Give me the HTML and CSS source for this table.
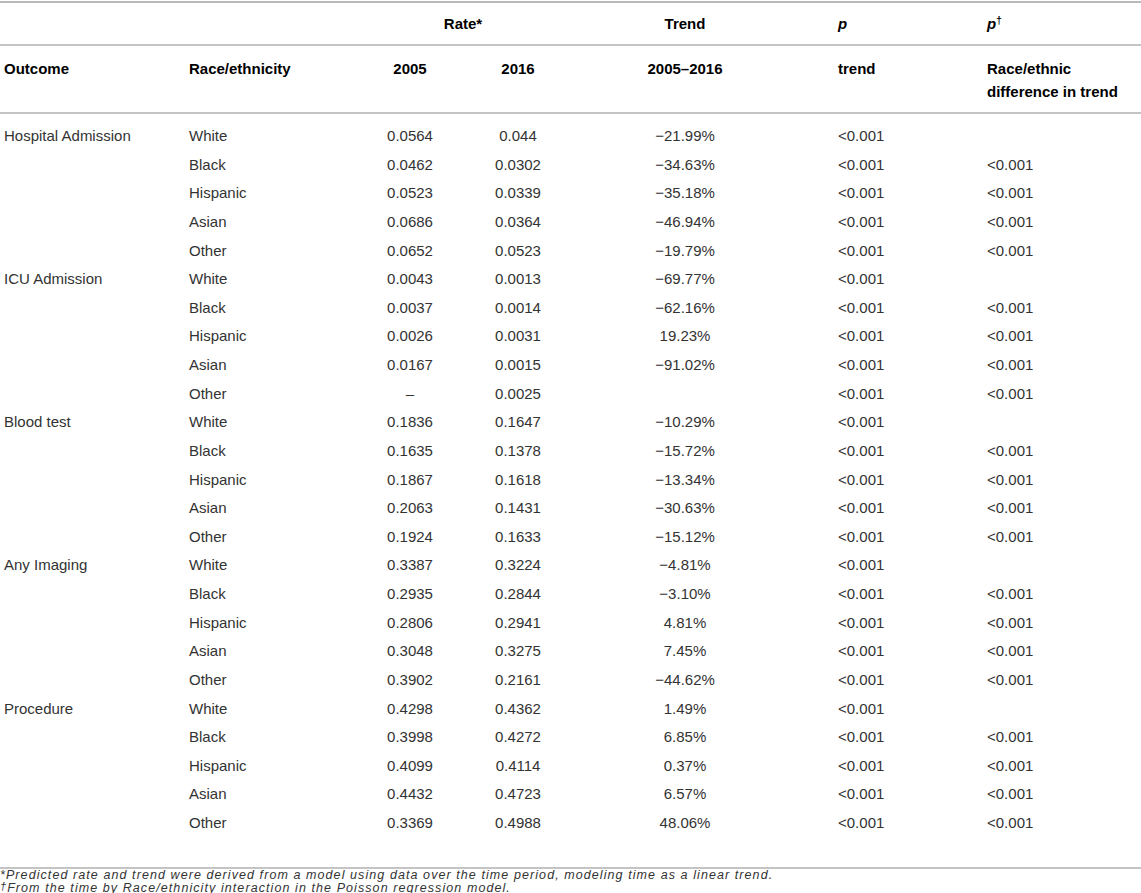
FILE: index.html
```html
<!DOCTYPE html>
<html lang="en">
<head>
<meta charset="utf-8">
<title>Table</title>
<link rel="stylesheet" href="styles.css">
</head>
<body>
<table class="data">
  <colgroup>
    <col class="c1"><col class="c2"><col class="c3"><col class="c4"><col class="c5"><col class="c6"><col class="c7">
  </colgroup>
  <thead>
    <tr class="h1">
      <th></th><th></th>
      <th colspan="2" class="ctr">Rate*</th>
      <th class="ctr">Trend</th>
      <th class="lft pad"><i>p</i></th>
      <th class="lft pad"><i>p</i><sup>†</sup></th>
    </tr>
    <tr class="h2">
      <th class="lft">Outcome</th>
      <th class="lft">Race/ethnicity</th>
      <th class="ctr">2005</th>
      <th class="ctr">2016</th>
      <th class="ctr">2005–2016</th>
      <th class="lft pad">trend</th>
      <th class="lft pad">Race/ethnic<br>difference in trend</th>
    </tr>
  </thead>
  <tbody>
    <tr class="first"><td>Hospital Admission</td><td>White</td><td class="ctr">0.0564</td><td class="ctr">0.044</td><td class="ctr">−21.99%</td><td class="pad">&lt;0.001</td><td class="pad"></td></tr>
    <tr><td></td><td>Black</td><td class="ctr">0.0462</td><td class="ctr">0.0302</td><td class="ctr">−34.63%</td><td class="pad">&lt;0.001</td><td class="pad">&lt;0.001</td></tr>
    <tr><td></td><td>Hispanic</td><td class="ctr">0.0523</td><td class="ctr">0.0339</td><td class="ctr">−35.18%</td><td class="pad">&lt;0.001</td><td class="pad">&lt;0.001</td></tr>
    <tr><td></td><td>Asian</td><td class="ctr">0.0686</td><td class="ctr">0.0364</td><td class="ctr">−46.94%</td><td class="pad">&lt;0.001</td><td class="pad">&lt;0.001</td></tr>
    <tr><td></td><td>Other</td><td class="ctr">0.0652</td><td class="ctr">0.0523</td><td class="ctr">−19.79%</td><td class="pad">&lt;0.001</td><td class="pad">&lt;0.001</td></tr>
    <tr><td>ICU Admission</td><td>White</td><td class="ctr">0.0043</td><td class="ctr">0.0013</td><td class="ctr">−69.77%</td><td class="pad">&lt;0.001</td><td class="pad"></td></tr>
    <tr><td></td><td>Black</td><td class="ctr">0.0037</td><td class="ctr">0.0014</td><td class="ctr">−62.16%</td><td class="pad">&lt;0.001</td><td class="pad">&lt;0.001</td></tr>
    <tr><td></td><td>Hispanic</td><td class="ctr">0.0026</td><td class="ctr">0.0031</td><td class="ctr">19.23%</td><td class="pad">&lt;0.001</td><td class="pad">&lt;0.001</td></tr>
    <tr><td></td><td>Asian</td><td class="ctr">0.0167</td><td class="ctr">0.0015</td><td class="ctr">−91.02%</td><td class="pad">&lt;0.001</td><td class="pad">&lt;0.001</td></tr>
    <tr><td></td><td>Other</td><td class="ctr">–</td><td class="ctr">0.0025</td><td class="ctr"></td><td class="pad">&lt;0.001</td><td class="pad">&lt;0.001</td></tr>
    <tr><td>Blood test</td><td>White</td><td class="ctr">0.1836</td><td class="ctr">0.1647</td><td class="ctr">−10.29%</td><td class="pad">&lt;0.001</td><td class="pad"></td></tr>
    <tr><td></td><td>Black</td><td class="ctr">0.1635</td><td class="ctr">0.1378</td><td class="ctr">−15.72%</td><td class="pad">&lt;0.001</td><td class="pad">&lt;0.001</td></tr>
    <tr><td></td><td>Hispanic</td><td class="ctr">0.1867</td><td class="ctr">0.1618</td><td class="ctr">−13.34%</td><td class="pad">&lt;0.001</td><td class="pad">&lt;0.001</td></tr>
    <tr><td></td><td>Asian</td><td class="ctr">0.2063</td><td class="ctr">0.1431</td><td class="ctr">−30.63%</td><td class="pad">&lt;0.001</td><td class="pad">&lt;0.001</td></tr>
    <tr><td></td><td>Other</td><td class="ctr">0.1924</td><td class="ctr">0.1633</td><td class="ctr">−15.12%</td><td class="pad">&lt;0.001</td><td class="pad">&lt;0.001</td></tr>
    <tr><td>Any Imaging</td><td>White</td><td class="ctr">0.3387</td><td class="ctr">0.3224</td><td class="ctr">−4.81%</td><td class="pad">&lt;0.001</td><td class="pad"></td></tr>
    <tr><td></td><td>Black</td><td class="ctr">0.2935</td><td class="ctr">0.2844</td><td class="ctr">−3.10%</td><td class="pad">&lt;0.001</td><td class="pad">&lt;0.001</td></tr>
    <tr><td></td><td>Hispanic</td><td class="ctr">0.2806</td><td class="ctr">0.2941</td><td class="ctr">4.81%</td><td class="pad">&lt;0.001</td><td class="pad">&lt;0.001</td></tr>
    <tr><td></td><td>Asian</td><td class="ctr">0.3048</td><td class="ctr">0.3275</td><td class="ctr">7.45%</td><td class="pad">&lt;0.001</td><td class="pad">&lt;0.001</td></tr>
    <tr><td></td><td>Other</td><td class="ctr">0.3902</td><td class="ctr">0.2161</td><td class="ctr">−44.62%</td><td class="pad">&lt;0.001</td><td class="pad">&lt;0.001</td></tr>
    <tr><td>Procedure</td><td>White</td><td class="ctr">0.4298</td><td class="ctr">0.4362</td><td class="ctr">1.49%</td><td class="pad">&lt;0.001</td><td class="pad"></td></tr>
    <tr><td></td><td>Black</td><td class="ctr">0.3998</td><td class="ctr">0.4272</td><td class="ctr">6.85%</td><td class="pad">&lt;0.001</td><td class="pad">&lt;0.001</td></tr>
    <tr><td></td><td>Hispanic</td><td class="ctr">0.4099</td><td class="ctr">0.4114</td><td class="ctr">0.37%</td><td class="pad">&lt;0.001</td><td class="pad">&lt;0.001</td></tr>
    <tr><td></td><td>Asian</td><td class="ctr">0.4432</td><td class="ctr">0.4723</td><td class="ctr">6.57%</td><td class="pad">&lt;0.001</td><td class="pad">&lt;0.001</td></tr>
    <tr class="last"><td></td><td>Other</td><td class="ctr">0.3369</td><td class="ctr">0.4988</td><td class="ctr">48.06%</td><td class="pad">&lt;0.001</td><td class="pad">&lt;0.001</td></tr>
  </tbody>
</table>
<div class="notes">
  <p>*Predicted rate and trend were derived from a model using data over the time period, modeling time as a linear trend.</p>
  <p><span class="dag">†</span>From the time by Race/ethnicity interaction in the Poisson regression model.</p>
</div>
</body>
</html>
```

FILE: styles.css
```css
html, body {
  margin: 0;
  padding: 0;
  background: #fff;
}
body {
  font-family: "Liberation Sans", Arial, Helvetica, sans-serif;
  color: #333;
  width: 1141px;
}
.data {
  width: 1141px;
  table-layout: fixed;
  border-collapse: collapse;
  margin-top: 1px;
  font-size: 15px;
}
.c1 { width: 185px; }
.c2 { width: 170px; }
.c3 { width: 110px; }
.c4 { width: 106px; }
.c5 { width: 228px; }
.c6 { width: 149px; }
.c7 { width: 193px; }

.data thead { color: #000; }
.data th {
  font-weight: bold;
  padding: 0 4px;
  text-align: left;
}
.data th i { font-style: italic; }
.data th sup { font-size: 10px; vertical-align: 5px; line-height: 0; }
.h1 {
  border-top: 2px solid #b9b9b9;
  border-bottom: 2px solid #c4c4c4;
}
.h1 th {
  height: 41px;
  vertical-align: middle;
}
.h2 {
  border-bottom: 2px solid #c4c4c4;
}
.h2 th {
  vertical-align: top;
  line-height: 23px;
  padding-top: 11px;
  padding-bottom: 9px;
}
.data td {
  padding: 0 4px;
  line-height: 28.625px;
  white-space: nowrap;
}
.data .ctr { text-align: center; }
.data .lft { text-align: left; }
.data .pad { padding-left: 39px; }
.data tr.first td { padding-top: 8px; }
.data tr.last td { padding-bottom: 29px; }
.data tbody tr.last { border-bottom: 2px solid #c4c4c4; }

.notes {
  padding-top: 0;
  font-size: 12.5px;
  letter-spacing: 1.08px;
  font-style: italic;
  color: #333;
  line-height: 13px;
}
.notes p { margin: 0; }
.notes .dag { font-size: 11px; position: relative; top: -2px; letter-spacing: 1px; }
```
